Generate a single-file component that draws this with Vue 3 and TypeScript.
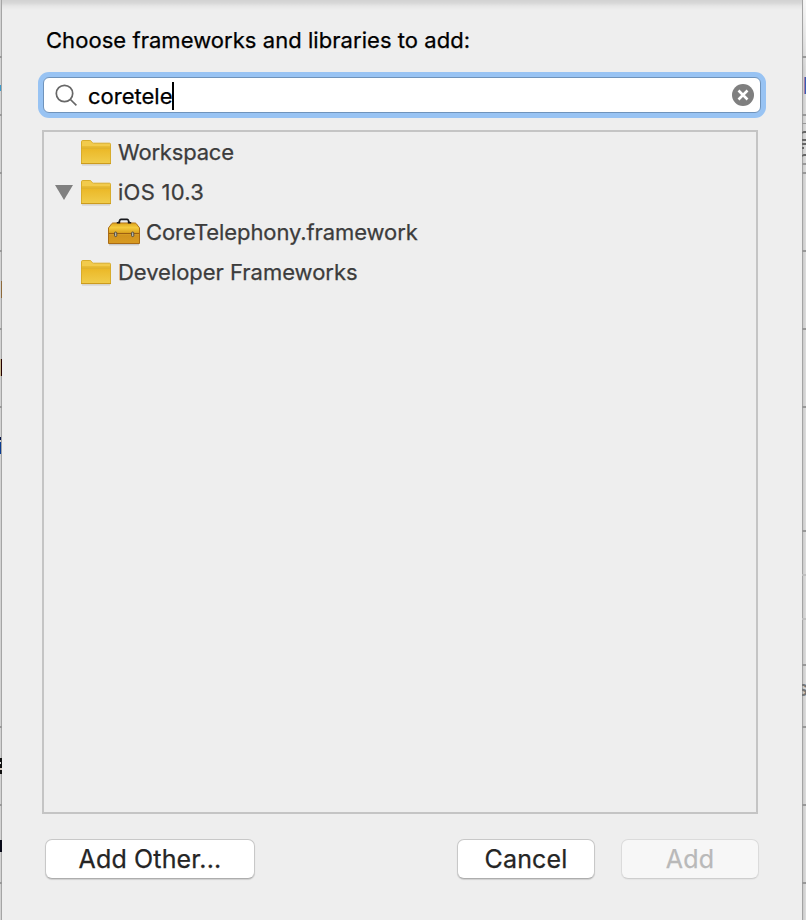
<script setup lang="ts">
import { ref } from 'vue'

interface TreeItem {
  label: string
  kind: 'folder' | 'framework'
  depth: number
  open: boolean
  tone: string
}

const query = ref('coretele')
const items: TreeItem[] = [
  { label: 'Workspace', kind: 'folder', depth: 0, open: false, tone: 'workspace' },
  { label: 'iOS 10.3', kind: 'folder', depth: 0, open: true, tone: 'ios' },
  { label: 'CoreTelephony.framework', kind: 'framework', depth: 1, open: false, tone: 'core' },
  { label: 'Developer Frameworks', kind: 'folder', depth: 0, open: false, tone: 'developer' },
]
const leftLines = [56, 114, 172, 250, 328, 406, 726, 804, 882]
const rightLines = [56, 114, 163, 172, 250, 328, 406, 530, 664, 726, 804, 882]
</script>

<template>
  <div class="screen">
    <svg class="gutter left" width="2" height="920" viewBox="0 0 2 920">
      <rect width="2" height="920" fill="#d2d2d2" />
      <rect x="1" width="1" height="920" fill="#a5a5a5" />
      <rect v-for="y in leftLines" :key="y" :y="y" width="2" height="2" fill="#999" />
      <rect y="85" width="1" height="6" fill="#3d9bcb" />
      <rect x="1" y="281" width="1" height="17" fill="#8d6a3b" />
      <rect y="359" width="1" height="17" fill="#c8b890" />
      <rect x="1" y="359" width="1" height="17" fill="#250000" />
      <rect y="437" width="1" height="3" fill="#001044" />
      <rect y="442" width="1" height="12" fill="#083b91" />
      <rect y="758" width="2" height="16" fill="#111" />
      <rect y="762" width="1" height="2" fill="#ddd" />
      <rect y="768" width="2" height="2" fill="#d8ccc4" />
      <rect y="840" width="2" height="12" fill="#080a18" />
    </svg>

    <main class="dialog">
      <h1 class="title"><span>Choose frameworks and libraries to add:</span></h1>

      <div class="search">
        <svg class="glass" width="24" height="24" viewBox="0 0 24 24">
          <circle cx="9.5" cy="10.5" r="8.2" />
          <path d="M15.4 16.5l6 5.8" />
        </svg>
        <span class="query">{{ query }}</span><i class="caret"></i>
        <svg class="clear" width="22" height="22" viewBox="0 0 22 22">
          <circle cx="11" cy="11" r="11" fill="#7f7f7f" />
          <path d="M6.5 6.5l9 9m0-9l-9 9" stroke="#fff" stroke-width="2.6" />
        </svg>
      </div>

      <div class="tree">
        <div v-for="item in items" :key="item.label" class="row" :class="{ nested: item.depth > 0 }">
          <span class="disclosure">
            <svg v-if="item.open" width="18" height="15" viewBox="0 0 18 15">
              <path d="M0 0h18L9 15z" fill="#808080" />
            </svg>
          </span>
          <svg v-if="item.kind === 'folder'" class="folder" width="32" height="26" viewBox="0 0 32 26">
            <defs>
              <linearGradient id="folderFace" x1="0" y1="0" x2="0" y2="1">
                <stop offset="0" stop-color="#ebb827" />
                <stop offset="1" stop-color="#f0cc4b" />
              </linearGradient>
            </defs>
            <path d="M2 25h28" stroke="#c9c9c9" />
            <path d="M1.5 23.5V1.8Q1.5.5 2.8.5h7.1q1 0 1.6 1l.9 1.2q.3.5 1 .5h16.1q1 0 1 1V23.5z" fill="#f2cb4c" stroke="#d7ac2c" />
            <path d="M2 8.5h28v15H2z" fill="url(#folderFace)" />
            <path d="M1.5 8h29" stroke="#d5a51e" />
            <path d="M2 6.8h28" stroke="#e5b52c" />
            <path d="M1 23.6h30" stroke="#c9981b" />
          </svg>
          <svg v-else class="toolbox" width="34" height="28" viewBox="0 0 34 28">
            <defs>
              <linearGradient id="lid" x1="0" y1="0" x2="0" y2="1">
                <stop offset="0" stop-color="#dfa922" />
                <stop offset=".4" stop-color="#f5cb3d" />
                <stop offset="1" stop-color="#d99f1c" />
              </linearGradient>
              <linearGradient id="box" x1="0" y1="0" x2="0" y2="1">
                <stop offset="0" stop-color="#c78818" />
                <stop offset="1" stop-color="#d89b22" />
              </linearGradient>
            </defs>
            <path d="M2 26.8h30" stroke="#bbb" />
            <path d="M1.5 25.5V10l3.2-4.3q.5-.7 1.5-.7h21.6q1 0 1.5.7l3.2 4.3v15.5z" fill="url(#box)" stroke="#a96b15" />
            <path d="M2 15.5V10l3-4q.3-.5 1-.5h22q.7 0 1 .5l3 4v5.5z" fill="url(#lid)" />
            <path d="M2 15.5h30" stroke="#9d6011" stroke-width="1.1" />
            <path d="M2 16.6h30" stroke="#dda52b" stroke-width=".7" />
            <path d="M12 4.5l.8-2.2q.3-.9 1.1-.9h6.3q.8 0 1.1.9l.8 2.2" fill="none" stroke="#17181c" stroke-width="1.8" />
            <path d="M9.8 4.7h3.4m7.6 0h3.4" stroke="#17181c" stroke-width="1.6" />
            <g fill="#b6b5ad" stroke="#59513c" stroke-width="1">
              <rect x="7.5" y="14" width="2.3" height="4.6" rx="1.1" />
              <rect x="24.5" y="14" width="2.3" height="4.6" rx="1.1" />
            </g>
          </svg>
          <span class="label" :class="item.tone">{{ item.label }}</span>
        </div>
      </div>

      <footer class="actions">
        <button class="btn other"><span>Add Other...</span></button>
        <button class="btn cancel"><span>Cancel</span></button>
        <button class="btn add" disabled><span>Add</span></button>
      </footer>
    </main>

    <svg class="gutter right" width="4" height="920" viewBox="0 0 4 920">
      <defs>
        <linearGradient id="shade" x1="0" y1="0" x2="1" y2="0">
          <stop offset="0" stop-color="#c4c4c4" />
          <stop offset="1" stop-color="#dedede" />
        </linearGradient>
        <linearGradient id="fade" x1="0" y1="0" x2="0" y2="1">
          <stop offset="0" stop-color="#fff" stop-opacity=".8" />
          <stop offset="1" stop-color="#fff" stop-opacity="0" />
        </linearGradient>
      </defs>
      <rect width="4" height="920" fill="url(#shade)" />
      <rect width="4" height="70" fill="url(#fade)" />
      <rect width="1" height="920" fill="#a3a3a3" />
      <rect v-for="y in rightLines" :key="y" :y="y" width="4" height="2" fill="#999" />
      <rect y="123" width="4" height="1" fill="#999" />
      <rect y="574" width="4" height="2" fill="#c0c0c0" />
      <rect y="618" width="4" height="2" fill="#c0c0c0" />
      <rect x="2" y="77" width="1" height="17" fill="#a67ca6" />
      <rect x="3" y="77" width="1" height="17" fill="#365eb5" />
      <path d="M0 133l2-1h2M0 140h4M0 144h4M0 148h2M0 156l2-1h2" fill="none" stroke="#666" stroke-width="1.8" />
      <text x="-5" y="696" class="fragment">s</text>
    </svg>
  </div>
</template>

<style>
body { margin: 0; }
</style>
<style scoped>
.screen {
  display: flex;
  width: 806px;
  height: 920px;
  overflow: hidden;
  font-family: Inter, "Liberation Sans", sans-serif;
  background: #eee;
}
.gutter { flex: none; display: block; overflow: hidden; }
.fragment { font: 600 21px Inter, sans-serif; fill: #777; }
.dialog {
  box-sizing: border-box;
  display: flex;
  flex-direction: column;
  width: 800px;
  height: 920px;
  padding: 24px 41px 0 40px;
  background: linear-gradient(#d2d2d2 0, #d8d8d8 3px, #e6e6e6 6px, #eee 10px);
}
.title {
  margin: 0 0 21px 4px;
  height: 32px;
  font-size: 22px;
  line-height: 32px;
  font-weight: 400;
  letter-spacing: .05px;
  white-space: nowrap;
  color: #000;
}
.title, .label, .query { -webkit-text-stroke: .25px currentColor; }
.search {
  box-sizing: border-box;
  display: flex;
  align-items: center;
  width: 718px;
  height: 36px;
  margin-left: 1px;
  padding: 0 6px 0 11px;
  border: 1px solid #6f93bb;
  border-radius: 6px;
  background: #fff;
  box-shadow: 0 0 0 5px #98c3f3;
}
.glass { fill: none; stroke: #676767; stroke-width: 1.7; }
.query { margin: 1px 0 0 9px; font-size: 22px; line-height: 30px; color: #000; }
.caret { width: 2px; height: 28px; margin-top: 2px; background: #000; }
.clear { margin-left: auto; }
.tree {
  box-sizing: border-box;
  width: 716px;
  height: 684px;
  margin-top: 17px;
  border: 2px solid #c4c4c4;
}
.row {
  display: flex;
  align-items: center;
  height: 40px;
  padding-left: 11px;
  white-space: nowrap;
}
.disclosure { display: flex; width: 25px; }
.nested .disclosure { width: 52px; }
.folder, .toolbox { flex: none; }
.folder { margin-top: 2px; }
.label { margin-left: 6px; font-size: 22px; line-height: 30px; color: #3c3c3c; }
.nested .label { margin-left: 5px; }
.workspace { letter-spacing: -.18px; }
.ios { letter-spacing: .25px; }
.core { letter-spacing: -.09px; }
.developer { letter-spacing: -.03px; }
.actions { display: flex; margin: 25px 0 0 3px; }
.btn {
  box-sizing: border-box;
  width: 138px;
  height: 40px;
  padding: 0;
  border: 1px solid #c8c8c8;
  border-bottom-color: #adadad;
  border-radius: 7px;
  background: #fff;
  box-shadow: 0 1px 1px #0002;
  font: 400 25px/38px Inter, "Liberation Sans", sans-serif;
  letter-spacing: .15px;
  -webkit-text-stroke: .25px currentColor;
  color: #252525;
}
.other { width: 210px; }
.cancel { margin-left: 202px; }
.add {
  margin-left: 26px;
  border-color: #dbdbdb;
  border-bottom-color: #cecece;
  background: #f7f7f7;
  color: #b9b9b9;
  box-shadow: 0 1px 1px #0000000a;
}
</style>
